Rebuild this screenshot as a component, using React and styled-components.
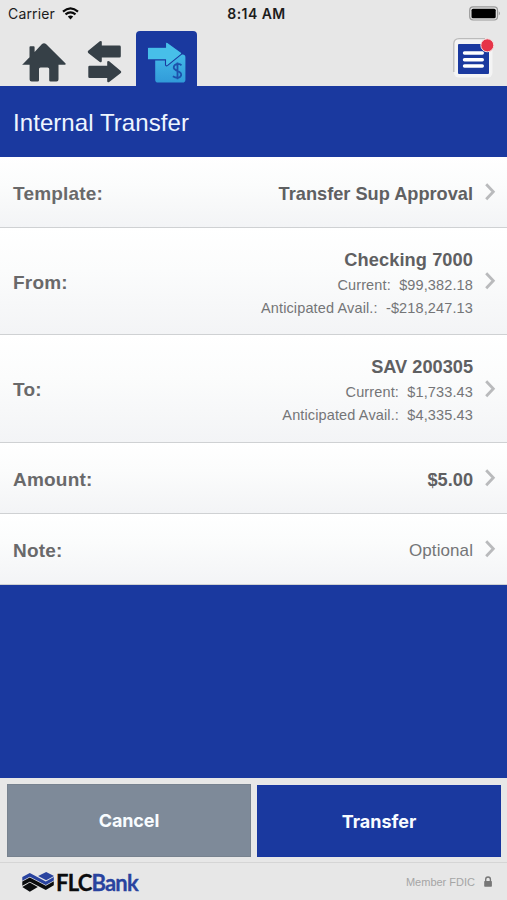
import React from "react";
import styled, { createGlobalStyle } from "styled-components";

const BLUE = "#1a399f";
const CHROME = "#e7e7e7";

const Global = createGlobalStyle`
  * { box-sizing: border-box; }
  body { margin: 0; background: ${CHROME}; }
  button { border: 0; padding: 0; background: none; font: inherit; }
`;

const Screen = styled.div`
  width: 507px;
  height: 900px;
  display: flex;
  flex-direction: column;
  overflow: hidden;
  background: ${CHROME};
  font-family: "Liberation Sans", Arial, sans-serif;
  color: #5f6062;
`;

const StatusBar = styled.div`
  height: 28px;
  flex: none;
  display: grid;
  grid-template-columns: 1fr auto 1fr;
  align-items: center;
  padding: 0 6px 0 8px;
  font-family: Inter, sans-serif;
  font-size: 14px;
  line-height: 28px;
  color: #1c1c1c;
`;

const Carrier = styled.div`
  display: flex;
  align-items: center;
  gap: 7px;
  letter-spacing: 0.15px;

  svg {
    margin-bottom: 2px;
  }
`;

const Clock = styled.div`
  font-weight: 600;
  letter-spacing: 0.45px;
  padding-left: 4px;
`;

const BatterySlot = styled.div`
  display: flex;
  justify-content: flex-end;
  padding-bottom: 1px;
`;

const NavBar = styled.nav`
  height: 58px;
  flex: none;
  display: flex;
  align-items: flex-end;
`;

const NavButton = styled.button`
  display: flex;
  width: ${(p) => p.$w}px;
  height: 55px;
  svg { display: block; }
`;

const ActiveTab = styled(NavButton)`
  background: ${BLUE};
  border-radius: 4px 4px 0 0;
`;

const MenuButton = styled(NavButton)`
  margin-left: auto;
`;

const TitleBar = styled.h1`
  margin: 0;
  height: 71px;
  flex: none;
  padding: 2px 13px 0;
  background: ${BLUE};
  color: #eef6ff;
  font-size: 24px;
  font-weight: 400;
  line-height: 70px;
  letter-spacing: 0.07px;
`;

const Row = styled.div`
  height: ${(p) => p.$h}px;
  flex: none;
  display: flex;
  align-items: center;
  padding: 0 11px 0 13px;
  background: linear-gradient(#ffffff, #fbfcfc 40%, #f3f4f6);
  border-bottom: 1px solid #cfd1d3;
`;

const Label = styled.div`
  flex: 1;
  padding-top: 3px;
  font-size: 19px;
  font-weight: 700;
  line-height: 24px;
  letter-spacing: 0.2px;
  color: #69696a;
`;

const Values = styled.div`
  display: flex;
  flex-direction: column;
  align-items: flex-end;
  padding-top: ${(p) => (p.$multi ? 5 : 3)}px;
  margin-right: 12px;
`;

const Primary = styled.div`
  font-size: 18.2px;
  font-weight: 700;
  line-height: 26px;
  letter-spacing: ${(p) => p.$ls ?? 0}px;
`;

const AccountName = styled(Primary)`
  line-height: 25px;
  margin-bottom: 1px;
`;

const Optional = styled.div`
  font-size: 17px;
  line-height: 26px;
  letter-spacing: 0.08px;
  color: #747577;
`;

const Detail = styled.div`
  font-size: 14.5px;
  line-height: 23px;
  white-space: pre;
  color: #747577;
  letter-spacing: 0.13px;
`;

const Filler = styled.div`
  flex: 1;
  background: ${BLUE};
`;

const Actions = styled.div`
  height: 85px;
  flex: none;
  display: flex;
  gap: 6px;
  padding: 6px 6px 6px 7px;
  border-bottom: 1px solid #d5d5d5;
`;

const Action = styled.button`
  flex: 1;
  height: ${(p) => (p.$primary ? 72 : 73)}px;
  margin-top: ${(p) => (p.$primary ? 1 : 0)}px;
  background: ${(p) => (p.$primary ? BLUE : "#7e8a99")};
  border: 1px solid ${(p) => (p.$primary ? "#1736a0" : "#77828f")};
  color: #f8fcff;
  font-family: Inter, sans-serif;
  font-size: 18px;
  font-weight: 700;
  letter-spacing: ${(p) => (p.$primary ? 0 : -0.1)}px;
`;

const Footer = styled.footer`
  height: 37px;
  flex: none;
  display: flex;
  align-items: center;
  justify-content: space-between;
  padding: 0 14px 0 21px;
`;

const Brand = styled.div`
  display: flex;
  align-items: center;
  font-family: Lato, sans-serif;
  font-size: 22px;
  font-weight: 700;
  line-height: 24px;
  letter-spacing: -0.8px;
  color: #0b0c0e;
  -webkit-text-stroke: 0.3px currentColor;
`;

const BrandAccent = styled.span`
  color: #29439f;
`;

const Wordmark = styled.div`
  margin-left: 1px;
  padding-top: 2px;
`;

const Member = styled.div`
  display: flex;
  align-items: center;
  gap: 8px;
  font-size: 11px;
  color: #a5a5a5;
`;

const WifiIcon = () => (
  <svg width="17" height="13" viewBox="0 0 17 13" fill="none" stroke="#0a0a0a">
    <path d="M1 4.6Q8.5-1.8 16 4.6" strokeWidth="2.2" />
    <path d="M3.5 7.4Q8.5 3.2 13.5 7.4" strokeWidth="2.1" />
    <path d="M5.8 9.6Q8.5 7.4 11.2 9.6L8.5 12.5Z" fill="#0a0a0a" stroke="none" />
  </svg>
);

const BatteryIcon = () => (
  <svg width="32" height="15" viewBox="0 0 32 15">
    <rect x=".7" y=".8" width="27.8" height="13.2" rx="3.4" fill="#e7e7e7" stroke="#999" strokeWidth="1.2" />
    <rect x="2.5" y="2.7" width="24.2" height="9.6" rx="1.5" fill="#000" />
    <path d="M29.8 5.3Q31.7 7.4 29.8 9.5Z" fill="#888" />
  </svg>
);

const HomeIcon = () => (
  <svg width="74" height="55" viewBox="0 31 74 55">
    <path
      d="M22.5 64.4 29.5 57.3V47.2Q29.5 46.3 30.4 46.3H33.7Q34.6 46.3 34.6 47.2V51.9L42 44.1Q44 42.3 46 44.1L65.6 63.5Q66.2 64.6 65 64.8H58.5V79.6Q58.5 81.6 56.5 81.6H50.6Q49.2 81.6 49.2 80.2V69Q49.2 67.4 47.6 67.4H40.6Q39 67.4 39 69V80.2Q39 81.6 37.6 81.6H31.6Q29.6 81.6 29.6 79.6V64.8H23Q21.9 65.1 22.5 64.4Z"
      fill="#364047"
    />
  </svg>
);

const ArrowsIcon = () => (
  <svg width="61" height="55" viewBox="74 31 61 55">
    <path
      d="M88.2 50.8 99.8 41.2Q101.7 40.4 101.8 42V45.6H119.5Q120.8 45.6 120.8 46.9V56.2Q120.8 57.6 119.5 57.6H101.8V61.1Q101.6 63 99.8 61.9L88.2 53Q87.2 51.8 88.2 50.8ZM120.8 70.9 109.2 61.3Q107.3 60.6 107.2 62V65.7H89.6Q88.3 65.7 88.3 67V76.8Q88.3 78.1 89.6 78.1H107.2V81.2Q107.4 83.1 109.2 81.9L120.8 73.1Q121.8 71.9 120.8 70.9Z"
      fill="#364047"
    />
  </svg>
);

const PaymentIcon = () => (
  <svg width="61" height="55" viewBox="135.5 31 61 55">
    <defs>
      <linearGradient id="note" x1="0" y1="0" x2="0" y2="1">
        <stop offset="0" stopColor="#43b8e8" />
        <stop offset="1" stopColor="#319bd9" />
      </linearGradient>
    </defs>
    <rect x="154.7" y="54.6" width="30.2" height="28" rx="2.8" fill="url(#note)" />
    <path
      d="M146.9 48.2Q146.9 47.2 148 47.2H165V43.4Q165.2 41.4 167.2 42.5L180.7 52.2Q182 53.3 180.7 54.4L167.2 65.4Q165.2 66.6 165 64.6V59.9H148Q146.9 59.9 146.9 58.9Z"
      fill="#47bfe9"
      stroke={BLUE}
      strokeWidth="1.1"
    />
    <path d="M181 65.2Q177.5 62.8 174.4 64.9Q171.7 68 175.2 70.1L178.6 71.8Q182.1 74 179.8 76.7Q176.6 79 172.4 76.2M177 62.4V79.2" fill="none" stroke="#1d51ac" strokeWidth="1.8" />
  </svg>
);

const MenuIcon = () => (
  <svg width="57" height="55" viewBox="450 31 57 55">
    <rect x="454" y="38.8" width="38.5" height="38.8" rx="5" fill="#f4f4f4" />
    <path d="M453.8 72V43.5Q454 38.7 459 38.6H485" fill="none" stroke="#bbb" strokeWidth="1.3" />
    <rect x="458" y="44" width="31" height="30" rx="1" fill={BLUE} />
    <path d="M464.5 53H482.3M464.5 59.7H482.3M464.5 66H482.3" stroke="#fff" strokeWidth="3.4" strokeLinecap="round" />
    <circle cx="487.3" cy="45.3" r="6.5" fill="#e63448" stroke="#f4dede" strokeWidth="1" />
  </svg>
);

const Chevron = () => (
  <svg width="11" height="18" viewBox="0 0 11 18" fill="none">
    <path d="M1.2 1.3 8.3 8.8 1.2 16.3" stroke="#b9babc" strokeWidth="2.8" />
  </svg>
);

const BrandMark = () => (
  <svg width="34" height="20" viewBox="21 872 34 20">
    <g fill="#29439f">
      <path d="M38.1 876 46.2 872 54 876 46.2 880.3Z" />
      <path d="M22.3 876.9 29.8 873 45.8 881.4 53.8 877.1V880.5L45.8 885 29.8 876.7 22.3 880.7Z" />
    </g>
    <g fill="#0b0c0e">
      <path d="M22.3 881.5 29.8 877.5 45.8 885.8 53.8 881.3V885.2L45.8 889.9 29.8 881.7 22.3 885.7Z" />
      <path d="M22.3 887 29.8 882.6 37.8 887 29.8 891.8Z" />
    </g>
  </svg>
);

const LockIcon = () => (
  <svg width="10" height="12" viewBox="0 0 10 12">
    <rect x="1.2" y="5" width="7.7" height="5.8" rx=".7" fill="#777" />
    <path d="M2.7 5.4V3.3a2.35 2.35 0 0 1 4.7 0V5.4" fill="none" stroke="#777" strokeWidth="1.4" />
  </svg>
);

export default function App() {
  return (
    <Screen>
      <Global />
      <StatusBar>
        <Carrier>Carrier <WifiIcon /></Carrier>
        <Clock>8:14 AM</Clock>
        <BatterySlot><BatteryIcon /></BatterySlot>
      </StatusBar>
      <NavBar>
        <NavButton $w={74} aria-label="Home"><HomeIcon /></NavButton>
        <NavButton $w={61.5} aria-label="Transfers"><ArrowsIcon /></NavButton>
        <ActiveTab $w={61} aria-label="Internal transfer"><PaymentIcon /></ActiveTab>
        <MenuButton $w={57} aria-label="Menu"><MenuIcon /></MenuButton>
      </NavBar>
      <TitleBar>Internal Transfer</TitleBar>
      <Row $h={71}>
        <Label>Template:</Label>
        <Values><Primary>Transfer Sup Approval</Primary></Values>
        <Chevron />
      </Row>
      <Row $h={107}>
        <Label>From:</Label>
        <Values $multi>
          <AccountName $ls={0.1}>Checking 7000</AccountName>
          <Detail>{"Current:  $99,382.18"}</Detail>
          <Detail>{"Anticipated Avail.:  -$218,247.13"}</Detail>
        </Values>
        <Chevron />
      </Row>
      <Row $h={108}>
        <Label>To:</Label>
        <Values $multi>
          <AccountName>SAV 200305</AccountName>
          <Detail>{"Current:  $1,733.43"}</Detail>
          <Detail>{"Anticipated Avail.:  $4,335.43"}</Detail>
        </Values>
        <Chevron />
      </Row>
      <Row $h={71}>
        <Label>Amount:</Label>
        <Values><Primary>$5.00</Primary></Values>
        <Chevron />
      </Row>
      <Row $h={71}>
        <Label>Note:</Label>
        <Values><Optional>Optional</Optional></Values>
        <Chevron />
      </Row>
      <Filler />
      <Actions>
        <Action>Cancel</Action>
        <Action $primary>Transfer</Action>
      </Actions>
      <Footer>
        <Brand>
          <BrandMark />
          <Wordmark>FLC<BrandAccent>Bank</BrandAccent></Wordmark>
        </Brand>
        <Member>Member FDIC <LockIcon /></Member>
      </Footer>
    </Screen>
  );
}
